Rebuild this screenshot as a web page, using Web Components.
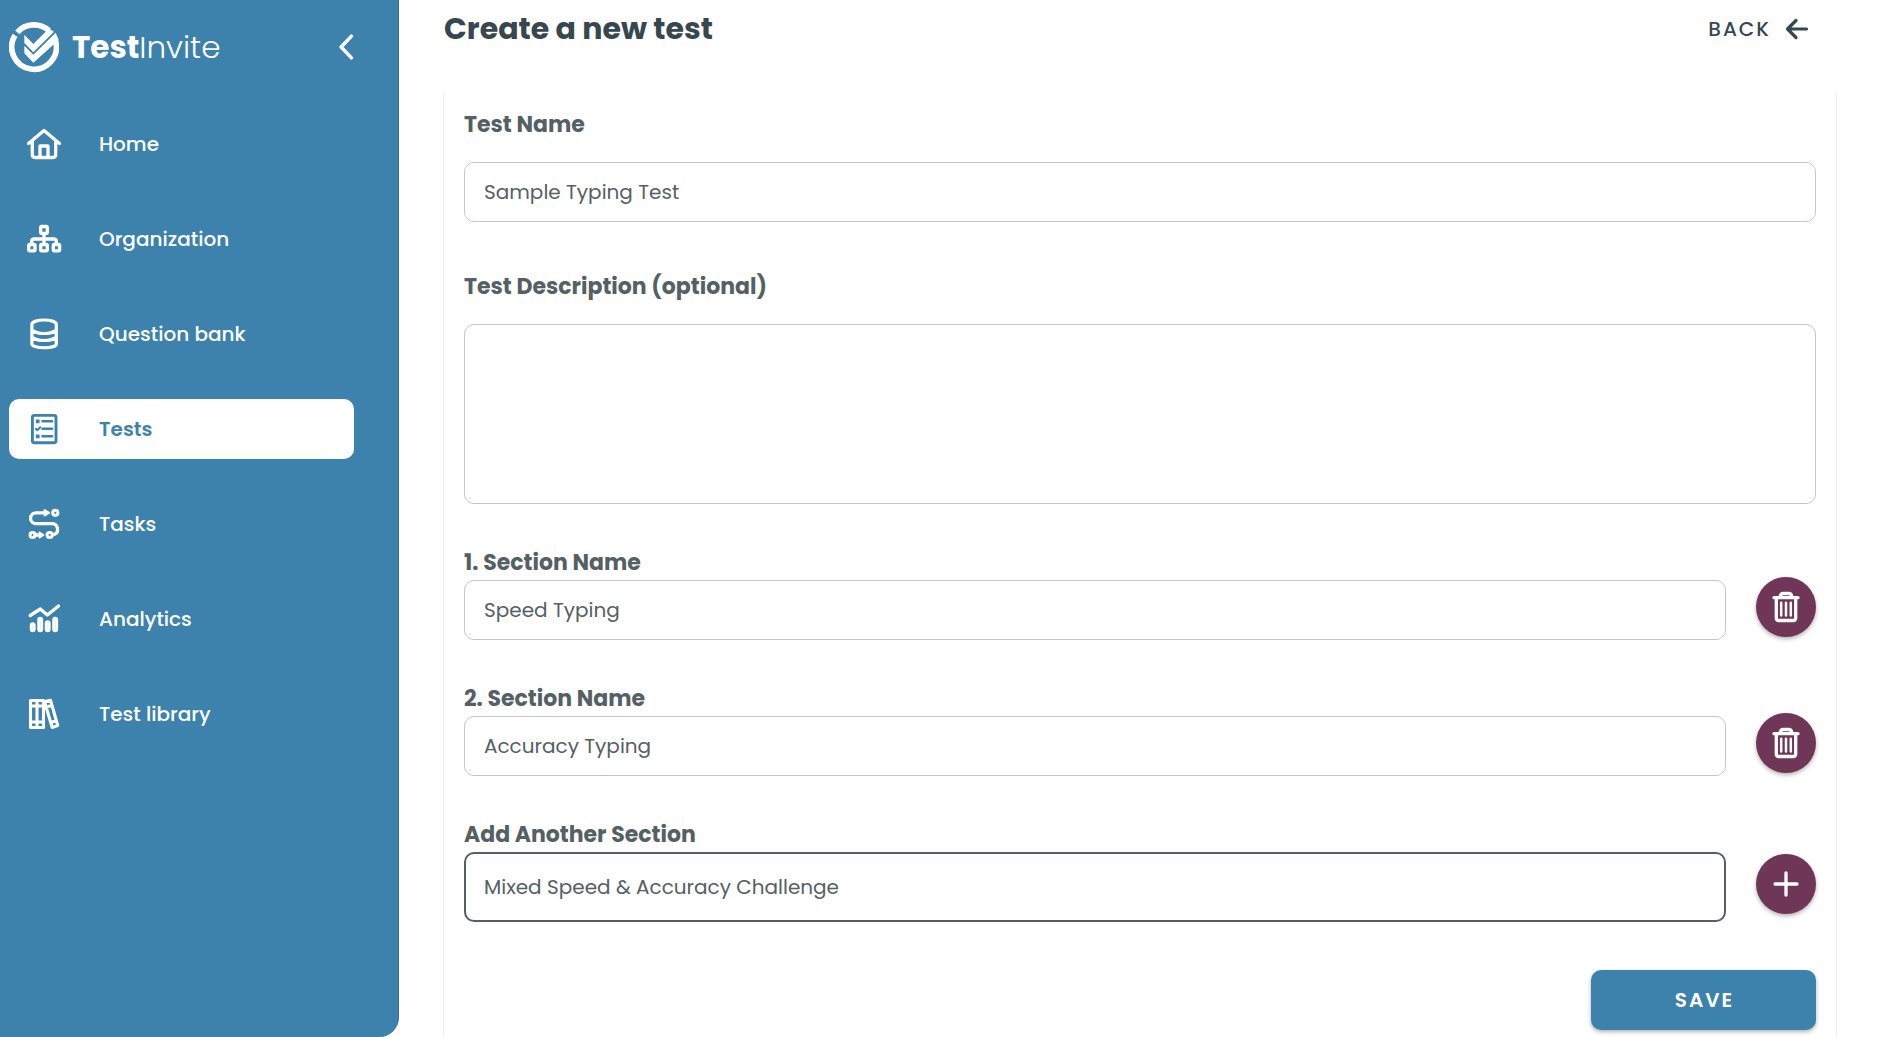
<!DOCTYPE html>
<html lang="en">
<head>
<meta charset="utf-8">
<meta name="viewport" content="width=device-width, initial-scale=1">
<title>Create a new test</title>
<style>
  body {
    margin: 0;
    font-family: Poppins, Inter, "Liberation Sans", sans-serif;
    --blue: #3d82ac;
    --plum: #6f3657;
    --slate: #37474f;
    --grey: #546064;
    background: #fefefe;
  }
</style>
</head>
<body>
<ti-app></ti-app>

<script>
const ICONS = {
  logo: ['0 0 150 153', `<path d="M25 31A67 67 0 0 1 120 26" stroke-width="17" stroke-linecap="butt"/><path d="M18 40A67 67 0 1 0 140 58" stroke-width="17" stroke-linecap="butt"/><path d="M46 38L73 66 112 27 118 19 135 29 73 91 46 63ZM46 71L73 98 140 32 149 54 73 122 46 94Z" fill="currentColor" stroke="none"/>`],
  chevron: ['0 0 24 24', `<path d="M17 2L7.500 12l9.500 10" stroke-width="3.200"/>`],
  arrow: ['0 0 24 24', `<path d="M21.500 12H3M11 3.500L2.500 12l8.500 8.500" stroke-width="3.200"/>`],
  home: ['0 0 36 36', `<path d="M2.500 17.500L18 4.500 33.500 17.500M6.300 15v13.500q0 3 3 3h17.400q3 0 3-3V15M14 31V20h8v11"/>`],
  org: ['0 0 36 36', `<rect x="14.700" y="5.500" width="6.600" height="6.800" rx="1"/><rect x="2.700" y="23.500" width="6.300" height="6.300" rx="1"/><rect x="14.700" y="23.500" width="6.600" height="6.300" rx="1"/><rect x="27.300" y="23.500" width="6.300" height="6.300" rx="1"/><path d="M18 13v10M5.700 23v-2.500q0-2.500 2.500-2.500h19.600q2.500 0 2.500 2.500V23"/>`],
  bank: ['0 0 36 36', `<path d="M5.900 8.500C5.900 2.500 30.300 2.500 30.300 8.500V28C30.300 33 5.900 33 5.900 28ZM5.900 14q4 3.500 12.200 3.500T30.300 14M5.900 21q4 3.500 12.200 3.500T30.300 21" stroke-width="3.200"/>`],
  tests: ['0 0 36 36', `<rect x="6.400" y="4.400" width="23.600" height="27.400" rx="2" stroke-width="2.900"/><path d="M16.500 10.300h9.500M16.500 17.700h9.500M16.500 25.300h9.500" stroke-width="2.600"/><path d="M9.800 17.700l1.500 1.500 3-3" stroke-width="2"/><path d="M9.800 8.500h3.800v3.800H9.800zM9.800 23.400h3.800v3.800H9.800z" fill="currentColor" stroke="none"/>`],
  tasks: ['0 0 36 36', `<path d="M20 6.800H10a5.400 5.400 0 0 0 0 10.900h16a5.600 5.600 0 0 1 2.500 10.600M9 29h5"/><circle cx="29.300" cy="6.800" r="2.600" stroke-width="3"/><circle cx="6.600" cy="29" r="2.600" stroke-width="3"/><circle cx="23.700" cy="29" r="2.600" stroke-width="3"/><path d="M18.500 4l4.800 2.800-4.800 2.800zM13.500 26.500l4 2.500-4 2.500z" fill="currentColor" stroke-width="1.800"/>`],
  analytics: ['0 0 36 36', `<path d="M4.200 14.500L14.300 8l7 6L32.500 5"/><g stroke-width="2.900"><rect x="5.200" y="22.800" width="3" height="7" rx="1.500"/><rect x="12.700" y="17.300" width="3" height="12.500" rx="1.500"/><rect x="20.200" y="20.800" width="3" height="9" rx="1.500"/><rect x="27.700" y="17.300" width="3" height="12.500" rx="1.500"/></g>`],
  library: ['0 0 36 36', `<path d="M4.500 4.500h13v27h-13zM11 4.500v27M4.500 10h13M4.500 26h13M18.500 5.500l6-1.300 7.200 25.300-5.500 2zM20 11l6-1.500M24.500 26.500l6-1.700" stroke-width="3.100"/>`],
  trash: ['0 0 36 36', `<path d="M6 8.700h24M12 8.200q.5-3.700 3.200-3.700h5.600q2.700 0 3.200 3.700M8.300 9v20q0 2.500 2.500 2.500h14.400q2.500 0 2.500-2.500V9"/><path d="M13.200 13.800v12.700M18 13.800v12.700M22.800 13.800v12.700" stroke-width="2.500"/>`],
  plus: ['0 0 36 36', `<path d="M18 7v22M7 18h22"/>`]
};

class Base extends HTMLElement {
  connectedCallback() {
    if (this.shadowRoot) return;
    this.attachShadow({ mode: 'open' }).innerHTML =
      `<style>*{box-sizing:border-box}${this.css()}</style>${this.html()}`;
  }
  at(name) { return this.getAttribute(name) || ''; }
}

customElements.define('ti-icon', class extends Base {
  css() { return `:host{display:block;flex:none;width:36px;height:36px}svg{display:block;width:100%;height:100%}`; }
  html() {
    const [box, art] = ICONS[this.at('name')];
    return `<svg viewBox="${box}" fill="none" stroke="currentColor" stroke-width="3.300" stroke-linecap="round" stroke-linejoin="round" aria-hidden="true">${art}</svg>`;
  }
});

customElements.define('ti-nav-item', class extends Base {
  css() { return `
    :host{display:block}
    a{display:flex;align-items:center;gap:37px;height:60px;padding:0 17px;border-radius:10px;
      color:#fff;text-decoration:none;font-size:20px;font-weight:500;line-height:30px}
    :host([active]) a{background:#fff;color:var(--blue);font-weight:600}`; }
  html() { return `<a href="#"><ti-icon name="${this.at('icon')}"></ti-icon><span><slot></slot></span></a>`; }
});

customElements.define('ti-sidebar', class extends Base {
  css() { return `
    :host{display:block;flex:none;width:399px;background:var(--blue);color:#fff;
      border-right:1px solid #34708f;border-bottom-right-radius:20px}
    header{display:flex;align-items:center;justify-content:space-between;height:94px;padding:0 39px 0 9px}
    .brand{display:flex;align-items:center;gap:13px;font-size:31px;font-weight:300;line-height:40px}
    .brand ti-icon{width:50px;height:51px}
    b{font-weight:700}
    button{display:block;padding:0;border:0;background:none;color:inherit}
    button ti-icon{width:26px;height:26px}
    nav{display:flex;flex-direction:column;gap:35px;padding:20px 44px 0 9px}`; }
  html() { return `
    <header>
      <div class="brand"><ti-icon name="logo"></ti-icon><span><b>Test</b>Invite</span></div>
      <button type="button" aria-label="Collapse menu"><ti-icon name="chevron"></ti-icon></button>
    </header>
    <nav>
      <ti-nav-item icon="home">Home</ti-nav-item>
      <ti-nav-item icon="org">Organization</ti-nav-item>
      <ti-nav-item icon="bank">Question bank</ti-nav-item>
      <ti-nav-item icon="tests" active>Tests</ti-nav-item>
      <ti-nav-item icon="tasks">Tasks</ti-nav-item>
      <ti-nav-item icon="analytics">Analytics</ti-nav-item>
      <ti-nav-item icon="library">Test library</ti-nav-item>
    </nav>`; }
});

customElements.define('ti-field', class extends Base {
  css() { return `
    :host{display:flex;flex-direction:column;gap:17px;flex:1;min-width:0;color:var(--grey)}
    :host([compact]){gap:0}
    label{font-size:22px;font-weight:700;line-height:40px}
    :host([compact]) label{line-height:34px}
    input,textarea{display:block;width:100%;height:60px;margin:0;padding:0 19px;border:1px solid #c3c7c9;
      border-radius:10px;background:#fff;color:inherit;font-family:inherit;font-size:20px;outline:0;resize:none}
    textarea{height:180px;padding:14px 19px}
    :host([current]) input{height:70px;padding:0 18px;border:2px solid var(--grey)}`; }
  html() {
    const box = this.hasAttribute('multiline')
      ? `<textarea id="box"></textarea>`
      : `<input id="box" type="text" value="${this.at('value').replace('&', '&amp;')}">`;
    return `<label for="box">${this.at('label')}</label>${box}`;
  }
});

customElements.define('ti-round-button', class extends Base {
  css() { return `
    :host{display:block;flex:none}
    button{display:flex;align-items:center;justify-content:center;width:60px;height:60px;padding:0;border:0;
      border-radius:50%;background:var(--plum);color:#fff;box-shadow:0 2px 4px rgba(0,0,0,.3)}`; }
  html() { return `<button type="button" aria-label="${this.at('label')}"><ti-icon name="${this.at('icon')}"></ti-icon></button>`; }
});

customElements.define('ti-section', class extends Base {
  css() { return `
    :host{display:flex;align-items:center;gap:30px}
    ti-round-button{padding-top:28px}`; }
  html() { return `<slot></slot><ti-round-button icon="${this.at('icon')}" label="${this.at('action')}"></ti-round-button>`; }
});

customElements.define('ti-test-form', class extends Base {
  css() { return `
    :host{display:block;border:1px solid #eeeff0;border-top:0;border-radius:4px;background:#fff}
    form{display:flex;flex-direction:column;gap:42px;padding:14px 20px 20px}
    .intro{display:flex;flex-direction:column;gap:45px}
    .save{align-self:flex-end;width:225px;height:60px;margin-top:6px;border:0;border-radius:10px;
      background:var(--blue);color:#fff;font-family:inherit;font-size:20px;font-weight:600;letter-spacing:2px;
      text-indent:2px;box-shadow:0 2px 4px rgba(0,0,0,.3)}`; }
  html() { return `
    <form>
      <div class="intro">
        <ti-field label="Test Name" value="Sample Typing Test"></ti-field>
        <ti-field label="Test Description (optional)" multiline></ti-field>
      </div>
      <ti-section icon="trash" action="Delete section 1"><ti-field compact label="1. Section Name" value="Speed Typing"></ti-field></ti-section>
      <ti-section icon="trash" action="Delete section 2"><ti-field compact label="2. Section Name" value="Accuracy Typing"></ti-field></ti-section>
      <ti-section icon="plus" action="Add section"><ti-field compact current label="Add Another Section" value="Mixed Speed &amp; Accuracy Challenge"></ti-field></ti-section>
      <button class="save" type="button">SAVE</button>
    </form>`; }
});

customElements.define('ti-page-header', class extends Base {
  css() { return `
    :host{display:flex;align-items:center;justify-content:space-between;height:58px;padding:0 28px 0 1px;color:var(--slate)}
    h1{margin:0;font-size:30px;font-weight:700;line-height:44px}
    button{display:flex;align-items:center;gap:14px;padding:0;border:0;background:none;color:inherit;
      font-family:inherit;font-size:20px;font-weight:500;letter-spacing:2px;line-height:30px}
    ti-icon{width:24px;height:24px}`; }
  html() { return `<h1><slot></slot></h1><button type="button"><span>BACK</span><ti-icon name="arrow"></ti-icon></button>`; }
});

customElements.define('ti-app', class extends Base {
  css() { return `
    :host{display:flex;height:100vh}
    main{flex:1;min-width:0;padding:0 40px 40px 44px;overflow-y:auto;scrollbar-width:none}
    ti-test-form{margin-top:33px}`; }
  html() { return `
    <ti-sidebar></ti-sidebar>
    <main>
      <ti-page-header>Create a new test</ti-page-header>
      <ti-test-form></ti-test-form>
    </main>`; }
});
</script>
</body>
</html>
